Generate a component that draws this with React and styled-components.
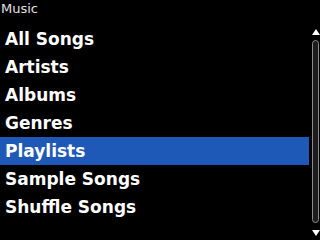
import styled, { createGlobalStyle } from "styled-components";

const Global = createGlobalStyle`
  html, body { margin: 0; padding: 0; background: #000; }
  body { width: 320px; height: 240px; overflow: hidden; }
`;

const Screen = styled.div`
  width: 320px;
  height: 240px;
  background: #000;
  display: flex;
  flex-direction: column;
  font-family: "DejaVu Sans", sans-serif;
`;

const Title = styled.div`
  height: 25px;
  padding-left: 1px;
  font-size: 13px;
  line-height: 17px;
  color: #e0e0e0;
`;

const Body = styled.div`
  display: flex;
  flex: 1;
`;

const List = styled.ul`
  list-style: none;
  margin: 0;
  padding: 0;
  width: 309px;
`;

const Item = styled.li`
  height: 28px;
  line-height: 28px;
  padding-left: 5px;
  font-size: 17px;
  font-weight: bold;
  color: #fff;
  background: ${(p) => (p.$selected ? "#1f59b8" : "transparent")};
`;

const Scroll = styled.div`
  flex: 1;
  display: flex;
  flex-direction: column;
  align-items: center;
  padding-top: 4px;
`;

const Arrow = styled.div`
  width: 0;
  height: 0;
  border-left: 4px solid transparent;
  border-right: 4px solid transparent;
  ${(p) => (p.$down ? "border-top: 6px solid #fff;" : "border-bottom: 6px solid #fff;")}
  margin-left: 2px;
`;

const Track = styled.div`
  width: 5px;
  height: 181px;
  margin: 5px 0 7px 2px;
  border: 1px solid #8a8a8a;
  border-radius: 4px;
  background: #1c1c1c;
`;

const items = ["All Songs", "Artists", "Albums", "Genres", "Playlists", "Sample Songs", "Shuffle Songs"];

export default function App() {
  return (
    <Screen>
      <Global />
      <Title>Music</Title>
      <Body>
        <List>
          {items.map((it) => (
            <Item key={it} $selected={it === "Playlists"}>{it}</Item>
          ))}
        </List>
        <Scroll>
          <Arrow />
          <Track />
          <Arrow $down />
        </Scroll>
      </Body>
    </Screen>
  );
}
